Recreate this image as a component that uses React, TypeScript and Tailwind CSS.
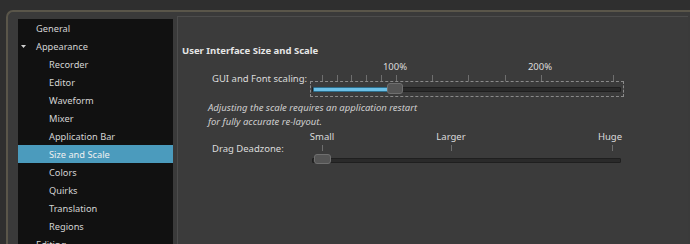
import React from "react";

const treeItems = [
  { label: "General", depth: 0 },
  { label: "Appearance", depth: 0, open: true },
  { label: "Recorder", depth: 1 },
  { label: "Editor", depth: 1 },
  { label: "Waveform", depth: 1 },
  { label: "Mixer", depth: 1 },
  { label: "Application Bar", depth: 1 },
  { label: "Size and Scale", depth: 1, selected: true },
  { label: "Colors", depth: 1 },
  { label: "Quirks", depth: 1 },
  { label: "Translation", depth: 1 },
  { label: "Regions", depth: 1 },
  { label: "Editing", depth: 0 },
];

const font = { fontFamily: '"Noto Sans", "Open Sans", sans-serif' };

type SliderProps = {
  labels: { x: number; text: string }[];
  ticks: number[];
  grooveTop: number;
  fill?: number;
  handle: { x: number; w: number; top: number; h: number };
  focus?: boolean;
};

function Slider({ labels, ticks, grooveTop, fill, handle, focus }: SliderProps) {
  return (
    <div className="relative h-[37px] w-[314px]">
      {labels.map((l) => (
        <span
          className="absolute top-0 -translate-x-1/2 text-[9.5px] leading-[14px] text-[#dcdcdc]"
          key={l.text}
          style={{ left: l.x }}
        >
          {l.text}
        </span>
      ))}
      {ticks.map((t) => (
        <span className="absolute top-[15px] h-[6px] w-px bg-[#6e6e6e]" key={t} style={{ left: t }} />
      ))}
      {focus && (
        <div className="absolute left-0 top-[21px] h-[16px] w-[314px] border border-dashed border-[#8a8a8a]" />
      )}
      <div
        className="absolute left-[2px] h-[5px] w-[309px] rounded-[1px] border border-[#1f1f1f] bg-[#2a2a2a]"
        style={{ top: grooveTop }}
      />
      {fill !== undefined && (
        <div
          className="absolute left-[3px] h-[5px] rounded-[1px] border border-[#2d6e8c] bg-[#6cc0e6]"
          style={{ top: grooveTop, width: fill }}
        />
      )}
      <div
        className="absolute rounded-[3px] border border-[#6f6f6f] bg-[#555555]"
        style={{ left: handle.x, top: handle.top, width: handle.w, height: handle.h }}
      />
    </div>
  );
}

export default function App() {
  return (
    <div className="flex h-[244px] w-[690px] flex-col overflow-hidden bg-[#2f2f2f]" style={font}>
      <div className="h-px bg-[#262626]" />
      <div className="flex flex-1 pl-[6px] pt-[10px]">
        <div className="flex flex-1 gap-[4px] rounded-tl-[7px] border-l-2 border-t-2 border-[#5a564a] bg-[#3a3a3a] pl-[10px] pr-[2px] pt-[4px]">
          <div className="mt-[3px] w-[155px] bg-[#111111]">
            {treeItems.map((item) => (
              <div
                className={`flex h-[18px] items-center pt-px text-[9.25px] ${
                  item.selected ? "bg-[#4b9bbd] text-[#f0f0f0]" : "text-[#d4d4d4]"
                }`}
                key={item.label}
                style={{ paddingLeft: item.depth === 0 ? 18 : 31 }}
              >
                {item.open && (
                  <svg className="-ml-[15px] mr-[10px]" height="5" viewBox="0 0 5 5" width="5">
                    <path d="M0 1h5L2.5 4z" fill="#d0d0d0" />
                  </svg>
                )}
                {item.label}
              </div>
            ))}
          </div>
          <div className="flex-1 border-l border-t border-[#4c4c4c] bg-[#3b3b3b] pl-[4px] pt-[27px]">
            <h2 className="text-[9.5px] font-bold leading-[14px] text-[#e6e6e6]">User Interface Size and Scale</h2>
            <div className="mt-[2px] flex">
              <span className="w-[128px] pl-[30px] pt-[12px] text-[9.5px] leading-[14px] text-[#dcdcdc]">GUI and Font scaling:</span>
              <Slider
                fill={76}
                focus
                grooveTop={27}
                handle={{ x: 77, w: 16, top: 23, h: 11 }}
                labels={[
                  { x: 85, text: "100%" },
                  { x: 230, text: "200%" },
                ]}
                ticks={[12, 27, 41, 56, 71, 86, 122, 158, 195, 231, 303]}
              />
            </div>
            <p className="ml-[26px] mt-[4px] text-[9.5px] italic leading-[13.5px] text-[#d0d0d0]">
              Adjusting the scale requires an application restart
              <br />
              for fully accurate re-layout.
            </p>
            <div className="mt-[2px] flex">
              <span className="w-[128px] pl-[30px] pt-[12px] text-[9.5px] leading-[14px] text-[#dcdcdc]">Drag Deadzone:</span>
              <Slider
                grooveTop={28}
                handle={{ x: 4, w: 17, top: 24, h: 10 }}
                labels={[
                  { x: 12, text: "Small" },
                  { x: 141, text: "Larger" },
                  { x: 300, text: "Huge" },
                ]}
                ticks={[12, 141, 302]}
              />
            </div>
          </div>
        </div>
      </div>
    </div>
  );
}
